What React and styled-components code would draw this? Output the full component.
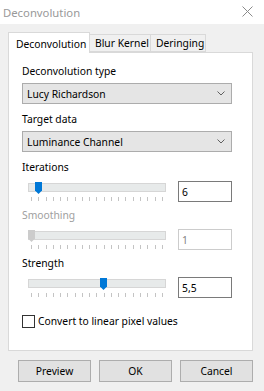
import React from "react";
import styled, { createGlobalStyle } from "styled-components";

const GlobalStyle = createGlobalStyle`
  html, body {
    margin: 0;
    padding: 0;
    background: #f0f0f0;
  }
  body {
    font-family: "Noto Sans", sans-serif;
    font-size: 10.3px;
    color: #000;
  }
`;

const TICKS = 19;

function Slider({ pos, disabled }) {
  return (
    <SliderBox>
      <Track>
        <Thumb style={{ left: `${pos * 131}px` }} viewBox="0 0 7 12" width="7" height="12">
          <polygon
            points="0,0 7,0 7,8.5 3.5,12 0,8.5"
            fill={disabled ? "#cccccc" : "#0078d7"}
          />
        </Thumb>
      </Track>
      <Ticks>
        {Array.from({ length: TICKS }).map((_, i) => (
          <Tick key={i} />
        ))}
      </Ticks>
    </SliderBox>
  );
}

function SliderGroup({ label, value, pos, disabled }) {
  return (
    <Group>
      <Label disabled={disabled}>{label}</Label>
      <SliderRow>
        <Slider pos={pos} disabled={disabled} />
        <TextBox disabled={disabled}>{value}</TextBox>
      </SliderRow>
    </Group>
  );
}

function Select({ value }) {
  return (
    <SelectBox>
      <span>{value}</span>
      <svg width="8" height="5" viewBox="0 0 8 5">
        <polyline points="0.5,0.5 4,4 7.5,0.5" fill="none" stroke="#606060" strokeWidth="1" />
      </svg>
    </SelectBox>
  );
}

export default function App() {
  return (
    <>
      <GlobalStyle />
      <Window>
        <TitleBar>
          <Title>Deconvolution</Title>
          <svg width="11" height="11" viewBox="0 0 11 11">
            <path d="M0.5 0.5 L10.5 10.5 M10.5 0.5 L0.5 10.5" stroke="#8a8a8a" strokeWidth="1" />
          </svg>
        </TitleBar>
        <Body>
          <Tabs>
            <Tab active>Deconvolution</Tab>
            <Tab>Blur Kernel</Tab>
            <Tab>Deringing</Tab>
          </Tabs>
          <Panel>
            <Label>Deconvolution type</Label>
            <Select value="Lucy Richardson" />
            <Label spaced>Target data</Label>
            <Select value="Luminance Channel" />
            <Sliders>
              <SliderGroup label="Iterations" value="6" pos={0.054} />
              <SliderGroup label="Smoothing" value="1" pos={0} disabled />
              <SliderGroup label="Strength" value="5,5" pos={0.55} />
            </Sliders>
            <CheckRow>
              <CheckBox />
              <span>Convert to linear pixel values</span>
            </CheckRow>
          </Panel>
          <Buttons>
            <Button>Preview</Button>
            <Button>OK</Button>
            <Button>Cancel</Button>
          </Buttons>
        </Body>
      </Window>
    </>
  );
}

const Window = styled.div`
  width: 264px;
  height: 391px;
  display: flex;
  flex-direction: column;
  background: #f0f0f0;
  overflow: hidden;
`;

const TitleBar = styled.div`
  height: 24px;
  flex-shrink: 0;
  background: #fff;
  display: flex;
  align-items: center;
  justify-content: space-between;
  padding: 0 11px 0 3px;
  svg {
    margin-top: -1px;
  }
`;

const Title = styled.span`
  color: #999;
  font-size: 11.3px;
`;

const Body = styled.div`
  flex: 1;
  display: flex;
  flex-direction: column;
  padding: 9px 0 0 8px;
`;

const Tabs = styled.div`
  display: flex;
  align-items: flex-end;
  height: 20px;
  position: relative;
  z-index: 1;
  margin-bottom: -1px;
`;

const Tab = styled.div`
  box-sizing: border-box;
  height: ${(p) => (p.active ? "21px" : "18px")};
  padding: ${(p) => (p.active ? "1px 0 0 7px" : "0 0 0 5px")};
  width: ${(p) => (p.active ? "82px" : "auto")};
  margin-bottom: ${(p) => (p.active ? "0" : "1px")};
  background: ${(p) => (p.active ? "#fff" : "#f0f0f0")};
  border: 1px solid #d9d9d9;
  border-bottom: ${(p) => (p.active ? "none" : "1px solid #d9d9d9")};
  border-left: ${(p) => (p.active ? "1px solid #d9d9d9" : "none")};
  display: flex;
  align-items: center;
  white-space: nowrap;
  &:nth-child(2) {
    width: 61px;
  }
  &:nth-child(3) {
    width: 55px;
  }
`;

const Panel = styled.div`
  box-sizing: border-box;
  width: 245px;
  height: 299px;
  background: #fff;
  border: 1px solid #d9d9d9;
  padding: 11px 0 0 13px;
  display: flex;
  flex-direction: column;
`;

const Label = styled.div`
  height: 15px;
  line-height: 15px;
  margin-bottom: 4px;
  margin-top: ${(p) => (p.spaced ? "8px" : "0")};
  color: ${(p) => (p.disabled ? "#a0a0a0" : "#000")};
`;

const SelectBox = styled.div`
  box-sizing: border-box;
  height: 21px;
  width: 210px;
  background: #e5e5e5;
  border: 1px solid #acacac;
  display: flex;
  align-items: center;
  justify-content: space-between;
  padding: 0 6px 0 4px;
`;

const Sliders = styled.div`
  display: flex;
  flex-direction: column;
  gap: 6px;
  margin-top: 8px;
`;

const Group = styled.div`
  display: flex;
  flex-direction: column;
  ${Label} {
    margin-bottom: 6px;
  }
`;

const SliderRow = styled.div`
  width: 210px;
  display: flex;
  align-items: flex-start;
  padding-left: 6px;
  gap: 12px;
  box-sizing: border-box;
`;

const SliderBox = styled.div`
  width: 138px;
  flex: 0 0 138px;
  padding-top: 2px;
  display: flex;
  flex-direction: column;
`;

const Track = styled.div`
  box-sizing: border-box;
  position: relative;
  height: 9px;
  background: #e7eaea;
  border: 1px solid #d6d6d6;
`;

const Thumb = styled.svg`
  position: absolute;
  top: -2px;
  margin-left: -1px;
  display: block;
`;

const Ticks = styled.div`
  display: flex;
  justify-content: space-between;
  padding: 0 3px;
  margin-top: 5px;
`;

const Tick = styled.span`
  width: 1px;
  height: 4px;
  background: #c4c4c4;
`;

const TextBox = styled.div`
  box-sizing: border-box;
  flex: 0 0 54px;
  height: 21px;
  background: #fff;
  border: 1px solid ${(p) => (p.disabled ? "#cccccc" : "#7a7a7a")};
  color: ${(p) => (p.disabled ? "#838383" : "#000")};
  padding-left: 3px;
  display: flex;
  align-items: center;
`;

const CheckRow = styled.div`
  display: flex;
  align-items: center;
  gap: 3px;
  margin-top: 16px;
`;

const CheckBox = styled.span`
  box-sizing: border-box;
  width: 13px;
  height: 13px;
  border: 1px solid #333;
  background: #fff;
`;

const Buttons = styled.div`
  display: flex;
  gap: 8px;
  padding: 9px 0 0 10px;
`;

const Button = styled.div`
  box-sizing: border-box;
  width: 73px;
  height: 22px;
  background: #e1e1e1;
  border: 1px solid #adadad;
  display: flex;
  align-items: center;
  justify-content: center;
`;
